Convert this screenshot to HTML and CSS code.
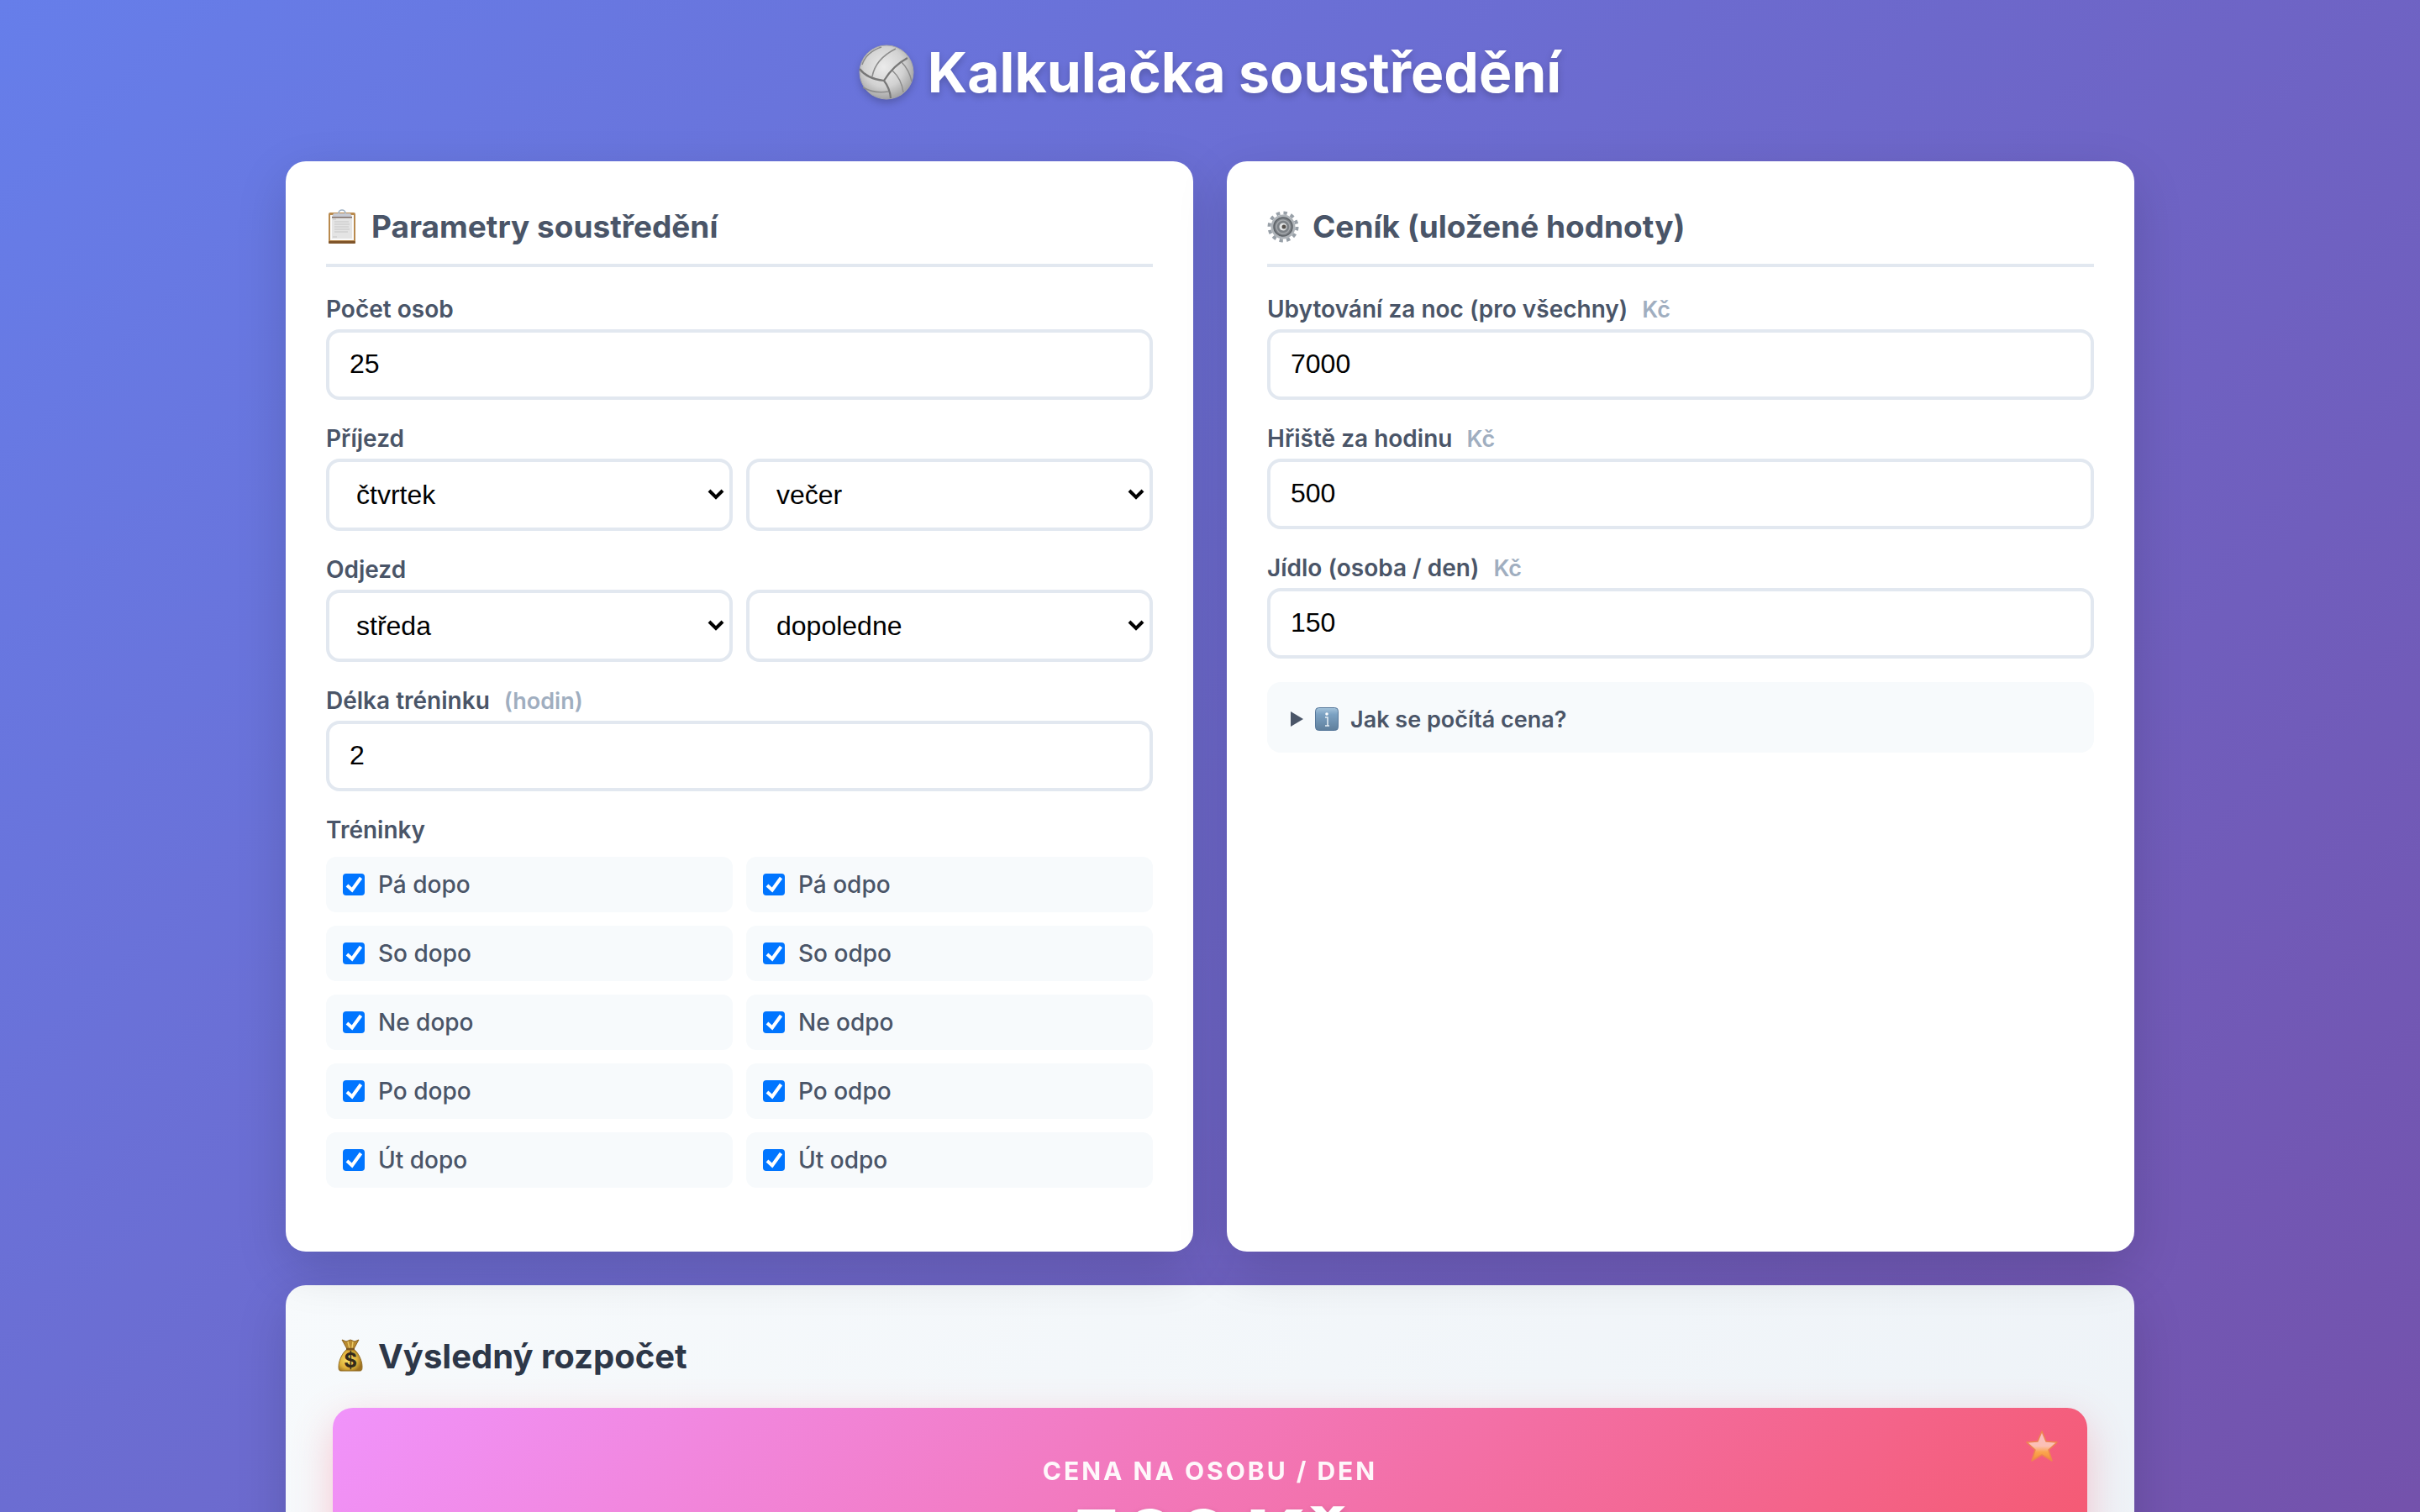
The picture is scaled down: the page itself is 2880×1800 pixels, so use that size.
FILE: index.html
```html
<!DOCTYPE html>
<html lang="cs">
<head>
    <meta charset="UTF-8">
    <meta name="viewport" content="width=device-width, initial-scale=1.0">
    <title>Kalkulačka soustředění</title>
    <link rel="stylesheet" href="styles.css">
</head>
<body>
    <div class="container">
        <h1>
            <svg class="icon-ball" viewBox="0 0 66 66" aria-hidden="true">
                <defs>
                    <radialGradient id="ball" cx="0.45" cy="0.4" r="0.62">
                        <stop offset="0" stop-color="#ebebeb"/>
                        <stop offset="0.6" stop-color="#d2d2d2"/>
                        <stop offset="1" stop-color="#a0a0a0"/>
                    </radialGradient>
                </defs>
                <circle cx="33" cy="33" r="32" fill="url(#ball)" stroke="#a8a8a8"/>
                <g fill="none" stroke="#8c8c8c" stroke-width="1.5">
                    <path d="M1 29Q10 41 30 43Q41 25 58 16M30 43Q37 52 38 64" stroke="#777" stroke-width="2.2"/>
                    <path d="M16 38Q20 17 44 5"/>
                    <path d="M4 24Q9 9 27 3"/>
                    <path d="M40 31Q51 41 53 57"/>
                    <path d="M51 21Q60 30 63 44"/>
                    <path d="M5 51Q19 59 35 56"/>
                </g>
            </svg>
            <span>Kalkulačka soustředění</span>
        </h1>

        <div class="grid">
            <div class="card">
                <h2>
                    <svg class="icon" viewBox="0 0 38 42" aria-hidden="true">
                        <rect x="3" y="4" width="32" height="37" rx="2" fill="#b98a4e"/>
                        <rect x="3" y="38" width="32" height="3" rx="1" fill="#80552a"/>
                        <path d="M5 7h28v30H5z" fill="#fafafa"/>
                        <path d="M7 9h24v26H7z" fill="#e4e4e4"/>
                        <path d="M10 15h17M10 18h18M10 21h17M10 24h18M10 27h16M8 33h5M8 12h4" stroke="#d0d0d0" stroke-width="1.4"/>
                        <path d="M15 5a4 4 0 0 1 8 0" fill="none" stroke="#9fb0c2" stroke-width="1.6"/>
                        <path d="M9 5h20l2 4H7z" fill="#c6c9d2"/>
                        <path d="M7 9h24v1.500H7z" fill="#7d6d66"/>
                    </svg>
                    Parametry soustředění
                </h2>

                <div class="form-group">
                    <label for="pocetOsob">Počet osob</label>
                    <input type="text" inputmode="numeric" id="pocetOsob" value="25">
                </div>

                <div class="form-group">
                    <label for="prijezdDen">Příjezd</label>
                    <div class="row">
                        <select id="prijezdDen"><option>čtvrtek</option><option>pátek</option></select>
                        <select id="prijezdCas" aria-label="Příjezd čas"><option>večer</option><option>dopoledne</option></select>
                    </div>
                </div>

                <div class="form-group">
                    <label for="odjezdDen">Odjezd</label>
                    <div class="row">
                        <select id="odjezdDen"><option>středa</option><option>úterý</option></select>
                        <select id="odjezdCas" aria-label="Odjezd čas"><option>dopoledne</option><option>večer</option></select>
                    </div>
                </div>

                <div class="form-group">
                    <label for="delka">Délka tréninku <span class="unit">(hodin)</span></label>
                    <input type="text" inputmode="numeric" id="delka" value="2">
                </div>

                <div class="form-group">
                    <div class="label">Tréninky</div>
                    <div class="row trainings">
                        <label class="training"><input type="checkbox" checked>Pá dopo</label>
                        <label class="training"><input type="checkbox" checked>Pá odpo</label>
                        <label class="training"><input type="checkbox" checked>So dopo</label>
                        <label class="training"><input type="checkbox" checked>So odpo</label>
                        <label class="training"><input type="checkbox" checked>Ne dopo</label>
                        <label class="training"><input type="checkbox" checked>Ne odpo</label>
                        <label class="training"><input type="checkbox" checked>Po dopo</label>
                        <label class="training"><input type="checkbox" checked>Po odpo</label>
                        <label class="training"><input type="checkbox" checked>Út dopo</label>
                        <label class="training"><input type="checkbox" checked>Út odpo</label>
                    </div>
                </div>
            </div>

            <div class="card">
                <h2>
                    <svg class="icon" viewBox="0 0 38 42" aria-hidden="true">
                        <circle cx="19" cy="21" r="16.500" fill="none" stroke="#98a0a8" stroke-width="4" stroke-dasharray="4.320 4.320"/>
                        <circle cx="19" cy="21" r="14.500" fill="#aeb3b8"/>
                        <circle cx="19" cy="21" r="11" fill="#7d8287" stroke="#5f6469" stroke-width="1.5"/>
                        <circle cx="19" cy="21" r="8" fill="none" stroke="#a3a7ab" stroke-width="1.5"/>
                        <circle cx="19" cy="21" r="4.500" fill="#e3e5e6"/>
                        <circle cx="20" cy="21" r="2.500" fill="#55514d"/>
                    </svg>
                    Ceník (uložené hodnoty)
                </h2>

                <div class="form-group">
                    <label for="ubytovani">Ubytování za noc (pro všechny) <span class="unit">Kč</span></label>
                    <input type="text" inputmode="numeric" id="ubytovani" value="7000">
                </div>

                <div class="form-group">
                    <label for="hriste">Hřiště za hodinu <span class="unit">Kč</span></label>
                    <input type="text" inputmode="numeric" id="hriste" value="500">
                </div>

                <div class="form-group">
                    <label for="jidlo">Jídlo (osoba / den) <span class="unit">Kč</span></label>
                    <input type="text" inputmode="numeric" id="jidlo" value="150">
                </div>

                <details>
                    <summary>
                        <svg class="marker" viewBox="0 0 15 18" aria-hidden="true"><path d="M0 0L15 9L0 18z"/></svg>
                        <svg class="icon-info" viewBox="0 0 28 28" aria-hidden="true">
                            <defs>
                                <linearGradient id="info" x1="0" y1="0" x2="0" y2="1">
                                    <stop offset="0" stop-color="#a5c4dc"/>
                                    <stop offset="0.3" stop-color="#7ba1c2"/>
                                    <stop offset="1" stop-color="#5f7f9c"/>
                                </linearGradient>
                            </defs>
                            <rect x="0.500" y="0.500" width="27" height="27" rx="4" fill="url(#info)" stroke="#56779a"/>
                            <circle cx="14" cy="8" r="1.800" fill="#fff"/>
                            <path d="M12 12H15V22M12 22H17" fill="none" stroke="#e8eff5" stroke-width="1.500"/>
                        </svg>
                        <span>Jak se počítá cena?</span>
                    </summary>
                </details>
            </div>
        </div>

        <div class="results">
            <h2>
                <svg class="icon-bag" viewBox="0 0 42 46" aria-hidden="true">
                    <defs>
                        <radialGradient id="bag" cx="0.4" cy="0.5" r="0.6">
                            <stop offset="0" stop-color="#fbe36a"/>
                            <stop offset="0.65" stop-color="#dcae38"/>
                            <stop offset="1" stop-color="#9c7020"/>
                        </radialGradient>
                    </defs>
                    <path d="M11 3l5 2 5-2 5 2 5-2-6 11h-8z" fill="#b98a30" stroke="#8b6424"/>
                    <path d="M18 5l2 8M24 5l-1 8" stroke="#e9c864" stroke-width="1.500"/>
                    <path d="M17 14h8c5 4 10 13 10 21 0 5-1 5-4 5H11c-3 0-4 0-4-5 0-8 5-17 10-21z" fill="url(#bag)" stroke="#94702a"/>
                    <path d="M16 14h10" stroke="#7c5620" stroke-width="2.500"/>
                    <text class="dollar" x="21" y="36">$</text>
                </svg>
                Výsledný rozpočet
            </h2>
            <div class="highlight">
                <svg class="icon-star" viewBox="0 0 40 38" aria-hidden="true">
                    <defs>
                        <linearGradient id="star" x1="0" y1="0" x2="0" y2="1">
                            <stop offset="0" stop-color="#f9bcc6"/>
                            <stop offset="0.5" stop-color="#fcc0b4"/>
                            <stop offset="0.7" stop-color="#fba64e"/>
                            <stop offset="1" stop-color="#f58a38"/>
                        </linearGradient>
                    </defs>
                    <path d="M20 2l5 12 13 1-10 9 4 13-12-7-12 7 4-13-10-9 13-1z" fill="url(#star)" stroke="#ee8550" stroke-width="1.500" stroke-linejoin="round"/>
                </svg>
                <div class="highlight-label">Cena na osobu / den</div>
                <div class="highlight-value">566 Kč</div>
            </div>
        </div>
    </div>
</body>
</html>
```

FILE: styles.css
```css
* {
    box-sizing: border-box;
    margin: 0;
    padding: 0;
}

body {
    font-family: Inter, "Liberation Sans", sans-serif;
    background: linear-gradient(135deg, #667eea 0%, #764ba2 100%);
    background-size: 100% 140vh; /* gradient runs on below the first screen */
    color: #4a5568;
    height: 100vh;
    padding: 40px;
    overflow: hidden;
}

.container {
    max-width: 2200px;
    margin: 0 auto;
}

h1 {
    display: flex;
    justify-content: center;
    align-items: center;
    gap: 16px;
    height: 92px;
    margin-bottom: 60px;
    font-size: 66px;
    font-weight: 700;
    color: white;
    text-shadow: 0 4px 8px rgba(0, 0, 0, 0.2);
}

.icon-ball {
    width: 66px;
    height: 66px;
    filter: drop-shadow(0 4px 4px rgba(0, 0, 0, 0.2));
}

.grid {
    display: grid;
    grid-template-columns: 1fr 1fr;
    gap: 40px;
    margin-bottom: 40px;
}

.card {
    background: white;
    border-radius: 24px;
    padding: 48px;
    box-shadow: 0 20px 60px rgba(0, 0, 0, 0.15);
}

h2 {
    display: flex;
    align-items: center;
    gap: 16px;
    font-weight: 700;
}

.card h2 {
    font-size: 37px;
    line-height: 60px;
    padding-bottom: 14px;
    margin-bottom: 32px;
    border-bottom: 4px solid #e2e8f0;
}

.icon {
    width: 38px;
    height: 42px;
}

.form-group {
    margin-bottom: 28px;
}

.form-group > label,
.label {
    display: block;
    margin-bottom: 6px;
    font-size: 28px;
    font-weight: 600;
    line-height: 36px;
}

.unit {
    margin-left: 10px;
    font-size: 27px;
    line-height: 1;
    color: #a0aec0;
}

input[type="text"],
select {
    width: 100%;
    border: 4px solid #e2e8f0;
    border-radius: 16px;
    background: white;
    color: black;
    font-family: "Liberation Sans", Arial, sans-serif;
    font-size: 32px;
}

input[type="text"] {
    display: block;
    height: 84px;
    padding: 0 24px 2px;
}

/* Own arrow instead of the browser's one */
select {
    height: 86px;
    padding: 0 32px;
    appearance: none;
    background: white url("data:image/svg+xml,%3Csvg xmlns='http://www.w3.org/2000/svg' width='20' height='14'%3E%3Cpath d='M2 2l8 8 8-8' fill='none' stroke='black' stroke-width='4'/%3E%3C/svg%3E") no-repeat right 6px center;
}

.row {
    display: grid;
    grid-template-columns: 1fr 1fr;
    gap: 16px;
}

.trainings {
    margin-top: 14px;
}

.training {
    display: flex;
    align-items: center;
    gap: 16px;
    height: 66px;
    padding: 0 20px;
    border-radius: 12px;
    background: #f7fafc;
    font-size: 28px;
    font-weight: 500;
}

.training input {
    width: 26px;
    height: 26px;
    appearance: none;
    border-radius: 4px;
    background: #0075ff url("data:image/svg+xml,%3Csvg xmlns='http://www.w3.org/2000/svg' viewBox='0 0 26 26'%3E%3Cpath d='M5 14l6 5.500L21.500 5' fill='none' stroke='white' stroke-width='4'/%3E%3C/svg%3E");
}

details {
    padding: 26px 28px 22px;
    border-radius: 16px;
    background: #f7fafc;
}

summary {
    display: flex;
    align-items: center;
    height: 36px;
    font-size: 27px;
    font-weight: 600;
}

.marker {
    width: 15px;
    height: 18px;
    margin-right: 14px;
    fill: #4a5568;
}

.icon-info {
    width: 28px;
    height: 28px;
    margin-right: 14px;
}

.results {
    padding: 56px;
    border-radius: 24px;
    background: linear-gradient(135deg, #f7fafc 0%, #edf2f7 100%);
    box-shadow: 0 20px 60px rgba(0, 0, 0, 0.15);
}

.results h2 {
    gap: 12px;
    margin-bottom: 32px;
    font-size: 40px;
    line-height: 58px;
    color: #2d3748;
}

.icon-bag {
    width: 42px;
    height: 46px;
}

.dollar {
    font-size: 24px;
    font-weight: 700;
    fill: #33291a;
    text-anchor: middle;
}

.highlight {
    position: relative;
    padding: 56px;
    border-radius: 24px;
    background: linear-gradient(135deg, #f093fb 0%, #f5576c 100%);
    color: white;
    text-align: center;
    box-shadow: 0 16px 48px rgba(245, 87, 108, 0.3);
}

.icon-star {
    position: absolute;
    top: 26px;
    right: 34px;
    width: 40px;
    height: 38px;
}

.highlight-label {
    margin-bottom: 6px;
    font-size: 30px;
    font-weight: 700;
    line-height: 38px;
    letter-spacing: 3px;
    text-transform: uppercase;
    opacity: 0.95;
}

.highlight-value {
    font-size: 96px;
    font-weight: 800;
    line-height: 112px;
    text-shadow: 0 4px 8px rgba(0, 0, 0, 0.2);
}
```
